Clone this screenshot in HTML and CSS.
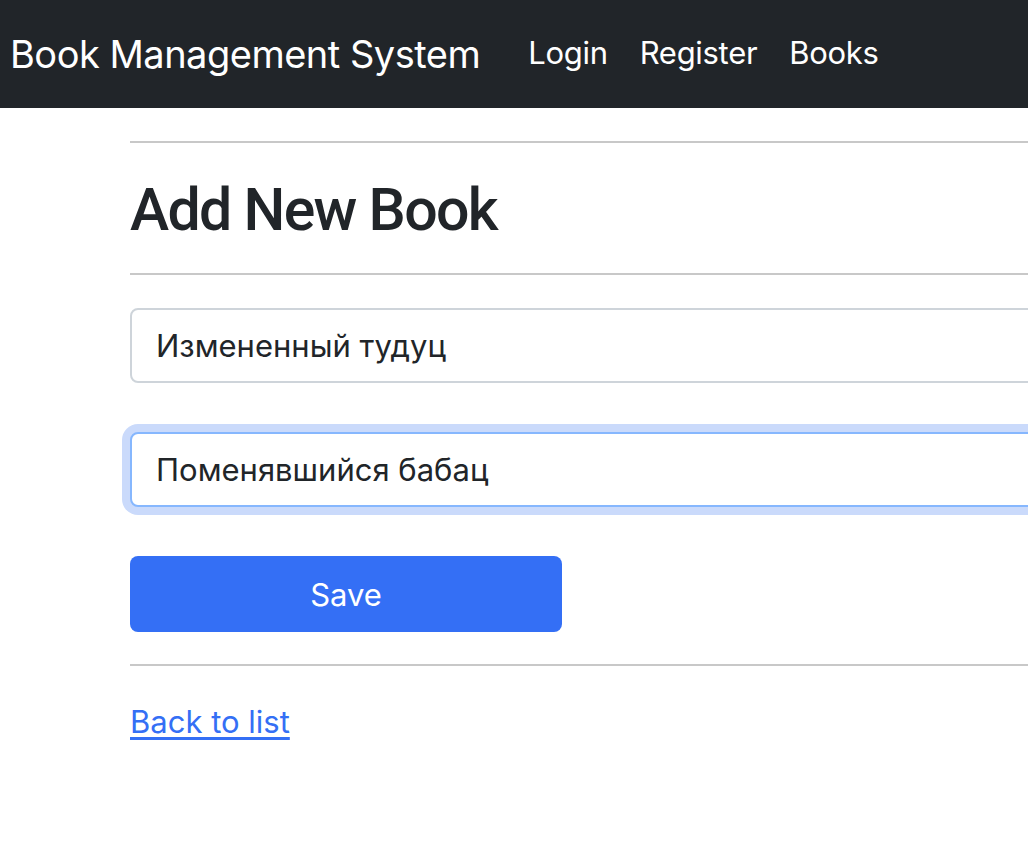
FILE: index.html
```html
<!DOCTYPE html>
<html lang="ru">
<head>
<meta charset="utf-8">
<title>Add New Book</title>
<link rel="stylesheet" href="styles.css">
</head>
<body>
<nav class="navbar">
  <a class="brand" href="#">Book Management System</a>
  <ul class="nav-links">
    <li><a href="#">Login</a></li>
    <li><a href="#">Register</a></li>
    <li><a href="#">Books</a></li>
  </ul>
</nav>
<main class="container">
  <hr class="rule rule-top">
  <h1 class="title">Add New Book</h1>
  <hr class="rule rule-mid">
  <form class="book-form">
    <input class="field" type="text" value="Измененный тудуц">
    <input class="field field-focus" type="text" value="Поменявшийся бабац">
    <button class="btn-save" type="button">Save</button>
  </form>
  <hr class="rule rule-bottom">
  <a class="back-link" href="#">Back to list</a>
</main>
</body>
</html>
```

FILE: styles.css
```css
html, body {
  margin: 0;
  padding: 0;
}
body {
  font-family: Inter, "Noto Sans", sans-serif;
  color: #212529;
  background: #fff;
  overflow: hidden;
  width: 1028px;
  height: 850px;
}
.navbar {
  height: 108px;
  background: #212529;
  display: flex;
  align-items: center;
  padding-left: 10px;
}
.brand {
  color: #fff;
  text-decoration: none;
  font-size: 38px;
  margin-right: 32px;
  letter-spacing: -0.5px;
}
.nav-links {
  list-style: none;
  display: flex;
  margin: 0;
  padding: 0 0 3px;
}
.nav-links a {
  display: block;
  color: #fff;
  text-decoration: none;
  font-size: 31px;
  padding: 0 16px;
  letter-spacing: -0.3px;
}
.container {
  margin-left: 130px;
  width: 1100px;
}
.rule {
  border: 0;
  border-top: 2px solid #c8c8c8;
  margin: 0;
}
.rule-top {
  margin-top: 33px;
}
.title {
  font-family: Roboto, "Liberation Sans", Arial, sans-serif;
  font-size: 59px;
  font-weight: 500;
  line-height: 72px;
  margin: 31px 0 27px;
  letter-spacing: -1.7px;
}
.book-form {
  display: flex;
  flex-direction: column;
  align-items: flex-start;
  padding-top: 33px;
}
.field {
  box-sizing: border-box;
  width: 1100px;
  height: 75px;
  border: 2px solid #ced4da;
  border-radius: 8px;
  padding: 0 24px;
  font-family: Inter, "Noto Sans", sans-serif;
  font-size: 31px;
  color: #212529;
  background: #fff;
  margin-bottom: 49px;
  outline: none;
}
.field-focus {
  border-color: #86b7fe;
  box-shadow: 0 0 0 8px #cadafb;
}
.btn-save {
  width: 432px;
  height: 76px;
  border: 0;
  border-radius: 8px;
  background: #346ff5;
  color: #fff;
  font-family: Inter, "Noto Sans", sans-serif;
  font-size: 31px;
  margin: 0 0 32px;
  cursor: pointer;
}
.rule-bottom {
  margin-bottom: 32px;
}
.back-link {
  display: inline-block;
  color: #346ff5;
  font-size: 31px;
  line-height: 48px;
  text-decoration: underline;
  text-underline-offset: 4px;
}
```
